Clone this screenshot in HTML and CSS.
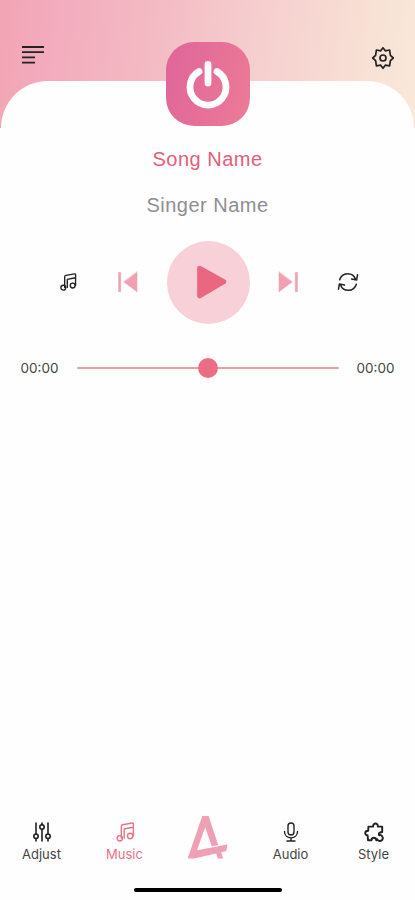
FILE: index.html
```html
<!DOCTYPE html>
<html lang="en">
<head>
<meta charset="utf-8">
<meta name="viewport" content="width=device-width, initial-scale=1">
<title>Music</title>
<link rel="stylesheet" href="styles.css">
</head>
<body>
<div class="app">
  <header class="header">
    <svg class="menu" viewBox="0 0 22 20"><path d="M0 2h22M0 7.2h22M0 12.4h13M0 17.6h13"/></svg>
    <svg class="gear" viewBox="0 0 24 24"><path d="M12 1.8L14.3 4.8L18.6 4L19.4 9.4L22.3 12L19.4 14.6L18.6 19.8L14.3 19.2L12 22.3L9.7 19.2L5.4 19.8L4.6 14.6L1.7 12L4.6 9.4L5.4 4L9.7 4.8Z"/><circle cx="12" cy="12" r="3"/></svg>
  </header>
  <main class="sheet">
    <div class="power">
      <svg viewBox="0 0 84 84"><path d="M33 29.5A18 18 0 1 0 51 29.5M42 22.5V41"/></svg>
    </div>
    <h1 class="song">Song Name</h1>
    <h2 class="singer">Singer Name</h2>
    <div class="controls">
      <svg class="note" viewBox="0 0 20 20"><path d="M6.3 16V4.3Q6.3 3 7.6 2.7L17.3 1Q18.4 .9 18.4 2V13.8M15.5 5.8L9.2 7V16M15.5 5.8L18.4 5.3"/><circle cx="4.8" cy="16.3" r="2.7"/><circle cx="15.2" cy="14" r="2.7"/></svg>
      <svg class="skip" viewBox="0 0 20 22"><path d="M0.5 1.5h2.2v19H.5z"/><path d="M19 1.2v19.6L6 11z"/></svg>
      <div class="play"><svg viewBox="0 0 84 84"><path d="M33 27.5L57.5 41.2 33 55.5z"/></svg></div>
      <svg class="skip next" viewBox="0 0 20 22"><path d="M0.5 1.5h2.2v19H.5z"/><path d="M19 1.2v19.6L6 11z"/></svg>
      <svg class="repeat" viewBox="0 0 22 20"><path d="M2.7 7.7A8.3 8.3 0 0 1 18.6 7.4M20.5 2.8L19.6 8 14.5 7M19.3 12.3A8.3 8.3 0 0 1 3.4 12.6M1.5 17.2L2.4 12 7.5 13"/></svg>
    </div>
    <div class="progress">
      <span>00:00</span>
      <div class="track"><div class="thumb"></div></div>
      <span>00:00</span>
    </div>
    <nav class="tabs">
      <div class="tab">
        <svg class="sliders" viewBox="0 0 20 20"><path d="M4 1v11M4 17v2M10 1v2M10 7.5V19M16 1v11M16 17v2"/><circle cx="4" cy="14.3" r="2.2"/><circle cx="10" cy="5" r="2.2"/><circle cx="16" cy="14.3" r="2.2"/></svg>
        <span>Adjust</span>
      </div>
      <div class="tab active">
        <svg viewBox="0 0 20 20"><path d="M6.3 16V4.3Q6.3 3 7.6 2.7L17.3 1Q18.4 .9 18.4 2V13.8M15.5 5.8L9.2 7V16M15.5 5.8L18.4 5.3"/><circle cx="4.8" cy="16.3" r="2.7"/><circle cx="15.2" cy="14" r="2.7"/></svg>
        <span>Music</span>
      </div>
      <div class="tab">
        <svg class="logo" viewBox="0 0 41 44"><path d="M15.3 1H21.6L31.2 30L24.8 31.4L18.2 12.3L10 35.2L40.3 29.5L39.5 36L34.2 37.2L36.2 43.4H30.8L29.2 38.5L7 43.4H.6z"/></svg>
      </div>
      <div class="tab">
        <svg viewBox="0 0 20 20"><rect x="7" y="1" width="6" height="12" rx="3"/><path d="M3.5 9.5C3.5 18 16.5 18 16.5 9.5M10 16v3M6 19h8"/></svg>
        <span>Audio</span>
      </div>
      <div class="tab">
        <svg class="bold" viewBox="0 0 20 20"><path d="M13.2 17.2A2.9 2.9 0 1 0 15.2 13.2C14.2 11.5 15 10.6 18.2 10V4.6H13.8C14.5 .5 8.5 .5 9.2 4.6H4.4L4.2 8.7C.3 8.8 .3 13.3 3.6 13.3L4 18.2H7.5C7.8 15 12 15 12.2 18.2Q13.2 18.3 13.2 17.2"/></svg>
        <span>Style</span>
      </div>
    </nav>
    <div class="home"></div>
  </main>
</div>
</body>
</html>
```
FILE: styles.css
```css
* { box-sizing: border-box; }

body {
  margin: 0;
  font-family: Inter, "Liberation Sans", sans-serif;
}

svg {
  display: block;
  flex: none;
  fill: none;
  stroke: #222;
  stroke-linecap: round;
  stroke-linejoin: round;
}

.app {
  display: flex;
  flex-direction: column;
  height: 900px;
  overflow: hidden;
  background: linear-gradient(97deg, #f2a5b3 0%, #f2abbd 12%, #f3bac3 36%, #f5ccce 58%, #f7dcd3 80%, #f9e9da 100%) top / 100% 128px no-repeat, #fefefe;
}

.header {
  display: flex;
  justify-content: space-between;
  height: 81px;
  padding: 45px 20px 0 21.5px;
}

.menu { width: 22px; height: 20px; stroke-width: 1.8; stroke-linecap: butt; }
.gear { width: 24px; height: 24px; margin-top: 1px; stroke-width: 1.7; }

.sheet {
  flex: 1;
  display: flex;
  flex-direction: column;
  align-items: center;
  margin: 0 1px;
  background: #fefefe;
  border-radius: 47px 47px 0 0;
}

.power {
  width: 84px;
  height: 84px;
  margin-top: -39px;
  border-radius: 28px;
  background: linear-gradient(105deg, #df6599, #ec7b97);
}

.power svg { stroke: #fff; stroke-width: 6.8; }

.song, .singer {
  margin: 21px 0 0;
  font: 400 20px/24px "Liberation Sans", sans-serif;
  letter-spacing: .5px;
  color: #e2607b;
}

.singer { margin-top: 22px; color: #8e8e93; }

.controls {
  display: flex;
  align-items: center;
  width: 300px;
  height: 84px;
  margin: 23px 0 0 3px;
}

.note { width: 18px; height: 18px; stroke-width: 1.5; }
.skip { width: 20px; height: 22px; margin-left: 41px; fill: #f0a0b1; stroke: #f0a0b1; stroke-width: .6; }
.skip.next { margin: 0 39px 0 28px; transform: scaleX(-1); }
.repeat { width: 22px; height: 20px; stroke-width: 1.5; }

.play {
  width: 83px;
  height: 83px;
  margin-left: 29px;
  border-radius: 50%;
  background: #f8d0d8;
}

.play svg { width: 83px; height: 83px; fill: #e96780; stroke: #e96780; stroke-width: 5; }

.progress {
  display: flex;
  align-items: center;
  justify-content: space-between;
  width: 374px;
  height: 22px;
  margin-top: 33px;
  font-size: 13.5px;
  color: #444;
}

.track {
  display: flex;
  align-items: center;
  justify-content: center;
  width: 262px;
  height: 2.5px;
  border-radius: 2px;
  background: #f09aa7;
}

.thumb { flex: none; width: 20px; height: 20px; border-radius: 50%; background: #eb6d84; }

.tabs {
  display: grid;
  grid-template-columns: repeat(5, 83px);
  height: 50px;
  margin-top: auto;
}

.tab {
  display: flex;
  flex-direction: column;
  align-items: center;
  font-size: 13px;
  line-height: 16px;
  color: #444;
}

.tab svg { width: 20px; height: 20px; margin: 7px 0 4px; stroke-width: 1.4; }
.tab .sliders { stroke-width: 1.6; }
.tab .bold { stroke-width: 1.9; }
.tab.active { color: #e9718a; }
.active svg { stroke: #e9718a; }
.tab .logo { width: 41px; height: 44px; margin: 0; fill: #f0a0b4; stroke: none; }

.home {
  width: 148px;
  height: 4px;
  margin: 23px 0 8px;
  border-radius: 2px;
  background: #000;
}
```
